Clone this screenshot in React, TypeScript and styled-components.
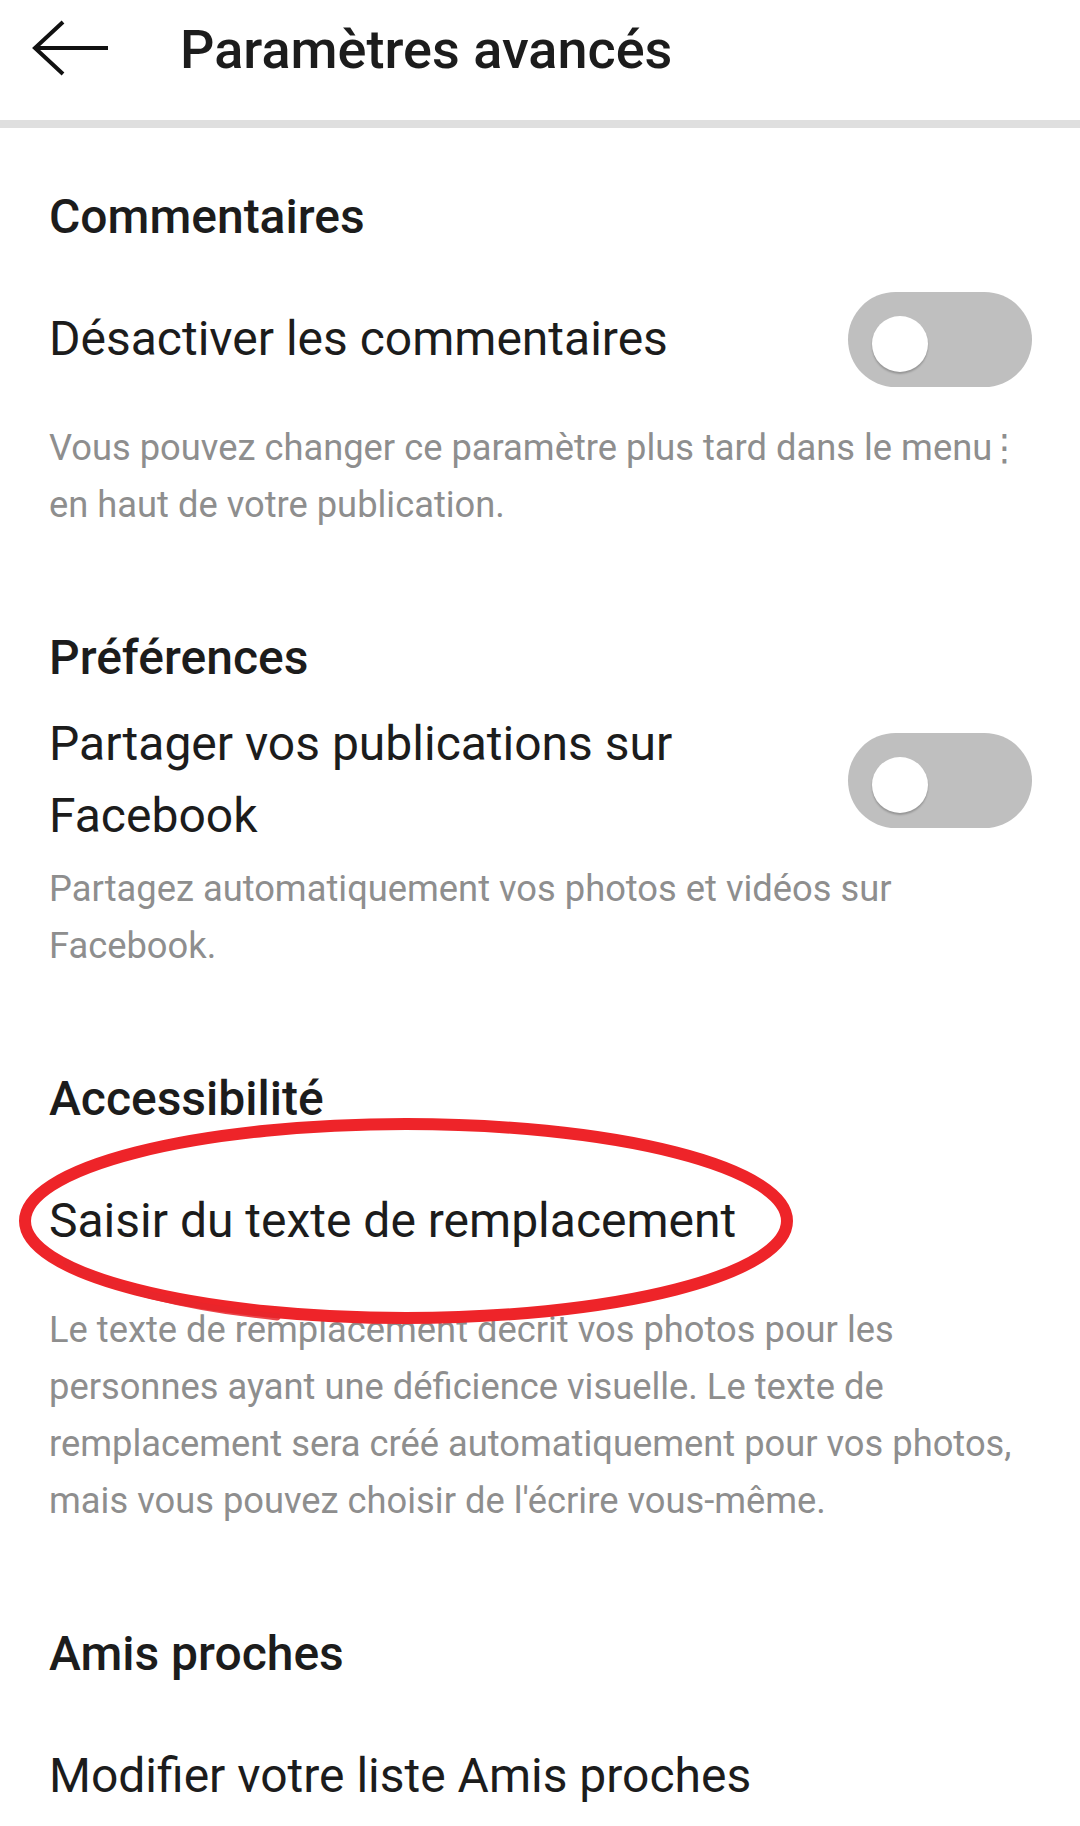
import styled, { createGlobalStyle } from 'styled-components'

const GlobalStyle = createGlobalStyle`
  html, body {
    margin: 0;
    padding: 0;
    background: #ffffff;
  }
  body {
    font-family: Roboto, "Noto Sans", "Liberation Sans", sans-serif;
    color: #262626;
  }
`

const Page = styled.div`
  width: 1080px;
  height: 1826px;
  background: #ffffff;
  overflow: hidden;
`

const Header = styled.header`
  height: 100px;
  display: flex;
  align-items: center;
  padding-left: 32px;
`

const BackButton = styled.button`
  border: none;
  background: transparent;
  padding: 0;
  width: 80px;
  height: 60px;
  display: flex;
  align-items: center;
  justify-content: center;
`

const Title = styled.h1`
  margin: 0 0 0 68px;
  font-size: 54px;
  font-weight: 500;
  line-height: 60px;
  color: #1c1c1c;
`

const Divider = styled.div`
  margin-top: 20px;
  height: 8px;
  background: #dfdfdf;
`

const Content = styled.main`
  padding: 61px 48px 0 49px;
`

const Section = styled.section`
  margin-bottom: 97px;
`

const SectionTitle = styled.h2`
  margin: 0;
  font-size: 48px;
  font-weight: 500;
  line-height: 56px;
  color: #1c1c1c;
`

const Row = styled.div`
  position: relative;
  margin-top: 22px;
  min-height: 144px;
  display: flex;
  align-items: center;
  justify-content: space-between;
  gap: 40px;
`

const RowLabel = styled.div`
  font-size: 48px;
  line-height: 72px;
  color: #1c1c1c;
`

const Description = styled.p`
  margin: 8px 0 0;
  font-size: 36.3px;
  line-height: 57px;
  color: #8e8e8e;
`

// the overflow-menu glyph sits tight after "menu", as in the app
const MenuGlyph = styled.span`
  display: inline-flex;
  justify-content: center;
  width: 6px;
  overflow: visible;
  font-family: Roboto, "DejaVu Sans", sans-serif;
`

const Track = styled.div<{ $on?: boolean }>`
  flex: none;
  width: 184px;
  height: 95px;
  border-radius: 48px;
  background: ${(p) => (p.$on ? '#3897f0' : '#bfbfbf')};
  position: relative;
`

const Thumb = styled.div<{ $on?: boolean }>`
  position: absolute;
  top: 24px;
  left: ${(p) => (p.$on ? '104px' : '24px')};
  width: 56px;
  height: 56px;
  border-radius: 50%;
  background: #ffffff;
  box-shadow: 0 2px 2px rgba(0, 0, 0, 0.22);
`

const Marker = styled.svg`
  position: absolute;
  left: -34px;
  top: -38px;
  width: 790px;
  height: 220px;
  pointer-events: none;
`

const Toggle = ({ on }: { on?: boolean }) => (
  <Track $on={on}>
    <Thumb $on={on} />
  </Track>
)

const BackArrow = () => (
  <svg width="80" height="60" viewBox="0 0 80 60">
    <path
      d="M31 2 L3 28 L31 54 M3 28 L76 28"
      fill="none"
      stroke="#111"
      strokeWidth="4"
      strokeLinecap="butt"
      strokeLinejoin="miter"
    />
  </svg>
)

export default function App() {
  return (
    <Page>
      <GlobalStyle />
      <Header>
        <BackButton aria-label="Retour">
          <BackArrow />
        </BackButton>
        <Title>Paramètres avancés</Title>
      </Header>
      <Divider />
      <Content>
        <Section>
          <SectionTitle>Commentaires</SectionTitle>
          <Row>
            <RowLabel>Désactiver les commentaires</RowLabel>
            <Toggle />
          </Row>
          <Description>
            Vous pouvez changer ce paramètre plus tard dans le menu{' '}
            <MenuGlyph>⋮</MenuGlyph> en haut de votre publication.
          </Description>
        </Section>

        <Section>
          <SectionTitle>Préférences</SectionTitle>
          <Row>
            <RowLabel>Partager vos publications sur Facebook</RowLabel>
            <Toggle />
          </Row>
          <Description>
            Partagez automatiquement vos photos et vidéos sur Facebook.
          </Description>
        </Section>

        <Section>
          <SectionTitle>Accessibilité</SectionTitle>
          <Row>
            <RowLabel>Saisir du texte de remplacement</RowLabel>
            <Marker viewBox="0 0 790 220">
              <ellipse
                cx="391"
                cy="110"
                rx="381"
                ry="97"
                fill="none"
                stroke="#ee2429"
                strokeWidth="12"
              />
              <path
                d="M 52 152 A 384 101 0 0 0 262 206"
                fill="none"
                stroke="#e8262b"
                strokeWidth="7"
                strokeLinecap="round"
                opacity="0.85"
              />
            </Marker>
          </Row>
          <Description>
            Le texte de remplacement décrit vos photos pour les personnes ayant une
            déficience visuelle. Le texte de remplacement sera créé automatiquement pour
            vos photos, mais vous pouvez choisir de l'écrire vous-même.
          </Description>
        </Section>

        <Section>
          <SectionTitle>Amis proches</SectionTitle>
          <Row>
            <RowLabel>Modifier votre liste Amis proches</RowLabel>
          </Row>
        </Section>
      </Content>
    </Page>
  )
}
